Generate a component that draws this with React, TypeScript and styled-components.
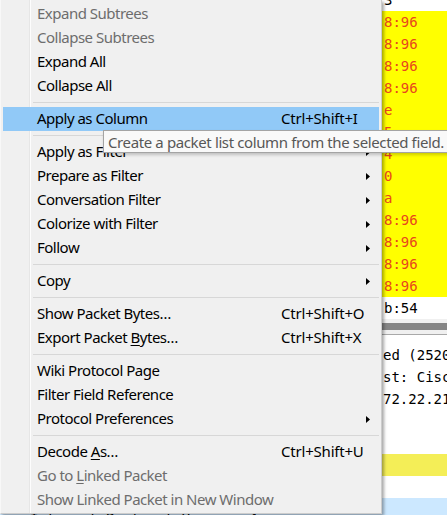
import React from 'react';
import styled, { createGlobalStyle } from 'styled-components';

const GlobalStyle = createGlobalStyle`
  html, body { margin: 0; padding: 0; }
  body {
    width: 447px;
    height: 515px;
    overflow: hidden;
    background: #ffffff;
    font-family: "Noto Sans", "Open Sans", sans-serif;
  }
`;

type Item = {
  label: string;
  shortcut?: string;
  sub?: boolean;
  disabled?: boolean;
  active?: boolean;
};

const SECTIONS: Item[][] = [
  [
    { label: 'Expand Subtrees', disabled: true },
    { label: 'Collapse Subtrees', disabled: true },
    { label: 'Expand All' },
    { label: 'Collapse All' },
  ],
  [{ label: 'Apply as Column', shortcut: 'Ctrl+Shift+I', active: true }],
  [
    { label: 'Apply as Filter', sub: true },
    { label: 'Prepare as Filter', sub: true },
    { label: 'Conversation Filter', sub: true },
    { label: 'Colorize with Filter', sub: true },
    { label: 'Follow', sub: true },
  ],
  [{ label: 'Copy', sub: true }],
  [
    { label: 'Show Packet Bytes…', shortcut: 'Ctrl+Shift+O' },
    { label: 'Export Packet &Bytes…', shortcut: 'Ctrl+Shift+X' },
  ],
  [
    { label: 'Wiki Protocol Page' },
    { label: 'Filter Field Reference' },
    { label: 'Protocol Preferences', sub: true },
  ],
  [
    { label: 'Decode &As…', shortcut: 'Ctrl+Shift+U' },
    { label: 'Go to &Linked Packet', disabled: true },
    { label: 'Show Linked Packet in New Window', disabled: true },
  ],
];

const PACKET_ROWS: { text: string; marked?: boolean }[] = [
  { text: '3' },
  { text: '8:96', marked: true },
  { text: '8:96', marked: true },
  { text: '8:96', marked: true },
  { text: '8:96', marked: true },
  { text: 'e', marked: true },
  { text: '5', marked: true },
  { text: '4', marked: true },
  { text: '0', marked: true },
  { text: 'a', marked: true },
  { text: '8:96', marked: true },
  { text: '8:96', marked: true },
  { text: '8:96', marked: true },
  { text: '8:96', marked: true },
  { text: 'b:54' },
];

const DETAIL_ROWS: { text: string; tone?: 'yellow' | 'blue' }[] = [
  { text: 'ed (25200 bits)' },
  { text: 'st: Cisco_18:18:96' },
  { text: '72.22.211.1' },
  { text: '' },
  { text: '' },
  { text: '', tone: 'yellow' },
  { text: '' },
  { text: 'Internet Protocol Version 4', tone: 'blue' },
];

const Page = styled.div`
  position: relative;
  width: 447px;
  height: 515px;
  overflow: hidden;
  background: #ffffff;
`;

/* ---------- background: packet list + details ---------- */

const PacketList = styled.div`
  display: flex;
  flex-direction: column;
  margin-top: -11px;
`;

const ListRow = styled.div<{ marked?: boolean }>`
  display: grid;
  grid-template-columns: 384px 1fr;
  height: 22px;
  align-items: center;
  background: ${p => (p.marked ? '#ffff00' : '#ffffff')};
  color: ${p => (p.marked ? '#e8461e' : '#000000')};
  font-family: "DejaVu Sans Mono", "Liberation Mono", monospace;
  font-size: 14px;
  white-space: nowrap;
  overflow: hidden;
`;

const Cell = styled.span`
  grid-column: 2;
  overflow: hidden;
`;

const HScroll = styled.div`
  height: 16px;
  background: #f0f0f0;
  border-bottom: 1px solid #a9a9a9;
  display: flex;
  flex-direction: column;
  padding-top: 4px;
  box-sizing: border-box;
`;

const Thumb = styled.div`
  height: 7px;
  background: #858585;
`;

const Details = styled.div`
  display: flex;
  flex-direction: column;
  padding-top: 9px;
`;

const DetailRow = styled.div<{ tone?: 'yellow' | 'blue' }>`
  display: grid;
  grid-template-columns: 383px 1fr;
  height: 22px;
  align-items: center;
  background: ${p => (p.tone === 'yellow' ? '#f4ee57' : p.tone === 'blue' ? '#cce8ff' : '#ffffff')};
  color: #000000;
  font-family: "DejaVu Sans Mono", "Liberation Mono", monospace;
  font-size: 14px;
  white-space: nowrap;
  overflow: hidden;
`;

const DetailText = styled.span<{ wide?: boolean }>`
  grid-column: ${p => (p.wide ? '1 / 3' : '2')};
  padding-left: ${p => (p.wide ? '30px' : '0')};
  padding-top: ${p => (p.wide ? '18px' : '0')};
  overflow: hidden;
`;

/* ---------- context menu ---------- */

const Menu = styled.div`
  position: absolute;
  left: 0;
  top: 0;
  width: 382px;
  box-sizing: border-box;
  padding: 2px 2px 1px 2px;
  border: 1px solid #cccccc;
  border-left-color: #f8f8f8;
  border-top: none;
  background: linear-gradient(
    to right,
    #f0f0f0 28px,
    #e6e6e6 28px,
    #e6e6e6 29px,
    #fdfdfd 29px,
    #fdfdfd 30px,
    #f0f0f0 30px
  );
  box-shadow: 2px 2px 3px rgba(0, 0, 0, 0.35);
  font-family: "Noto Sans", "Open Sans", sans-serif;
  font-size: 15px;
  letter-spacing: -0.5px;
`;

const Row = styled.div<{ disabled?: boolean; active?: boolean }>`
  display: grid;
  grid-template-columns: 244px 1fr 19px;
  align-items: center;
  height: 24px;
  padding-left: 34px;
  background: ${p => (p.active ? '#91c9f7' : 'transparent')};
  color: ${p => (p.disabled ? '#6d6d6d' : '#000000')};
  white-space: nowrap;
`;

const Label = styled.span`
  margin-top: -2px;
`;

const Mnemonic = styled.span`
  text-decoration: underline;
  text-underline-offset: 2px;
`;

const Shortcut = styled.span`
  margin-top: -2px;
  letter-spacing: -0.2px;
`;

const Arrow = styled.svg`
  margin-left: 6px;
  display: block;
`;

const Separator = styled.div`
  height: 1px;
  margin: 4px 0 4px 30px;
  background: #d7d7d7;
`;

const Tooltip = styled.div`
  position: absolute;
  left: 103px;
  top: 130px;
  height: 21px;
  padding: 0 14px 0 4px;
  display: flex;
  align-items: center;
  background: #f9f9f9;
  border: 1px solid #a4a4a4;
  box-shadow: 1px 2px 3px rgba(0, 0, 0, 0.2);
  color: #575757;
  font-family: "Noto Sans", "Open Sans", sans-serif;
  font-size: 15px;
  letter-spacing: -0.38px;
  white-space: nowrap;
`;

function renderLabel(label: string) {
  const i = label.indexOf('&');
  if (i < 0) return label;
  return (
    <>
      {label.slice(0, i)}
      <Mnemonic>{label[i + 1]}</Mnemonic>
      {label.slice(i + 2)}
    </>
  );
}

const SubArrow = () => (
  <Arrow width="4" height="7" viewBox="0 0 4 7">
    <polygon points="0,0 4,3.5 0,7" fill="#000000" />
  </Arrow>
);

export default function App() {
  return (
    <Page>
      <GlobalStyle />
      <PacketList>
        {PACKET_ROWS.map((r, i) => (
          <ListRow key={i} marked={r.marked}>
            <Cell>{r.text}</Cell>
          </ListRow>
        ))}
      </PacketList>
      <HScroll>
        <Thumb />
      </HScroll>
      <Details>
        {DETAIL_ROWS.map((r, i) => (
          <DetailRow key={i} tone={r.tone}>
            <DetailText wide={r.tone === 'blue'}>{r.text}</DetailText>
          </DetailRow>
        ))}
      </Details>

      <Menu>
        {SECTIONS.map((items, s) => (
          <React.Fragment key={s}>
            {s > 0 && <Separator />}
            {items.map(item => (
              <Row key={item.label} disabled={item.disabled} active={item.active}>
                <Label>{renderLabel(item.label)}</Label>
                <Shortcut>{item.shortcut}</Shortcut>
                {item.sub ? <SubArrow /> : <span />}
              </Row>
            ))}
          </React.Fragment>
        ))}
      </Menu>

      <Tooltip>Create a packet list column from the selected field.</Tooltip>
    </Page>
  );
}
